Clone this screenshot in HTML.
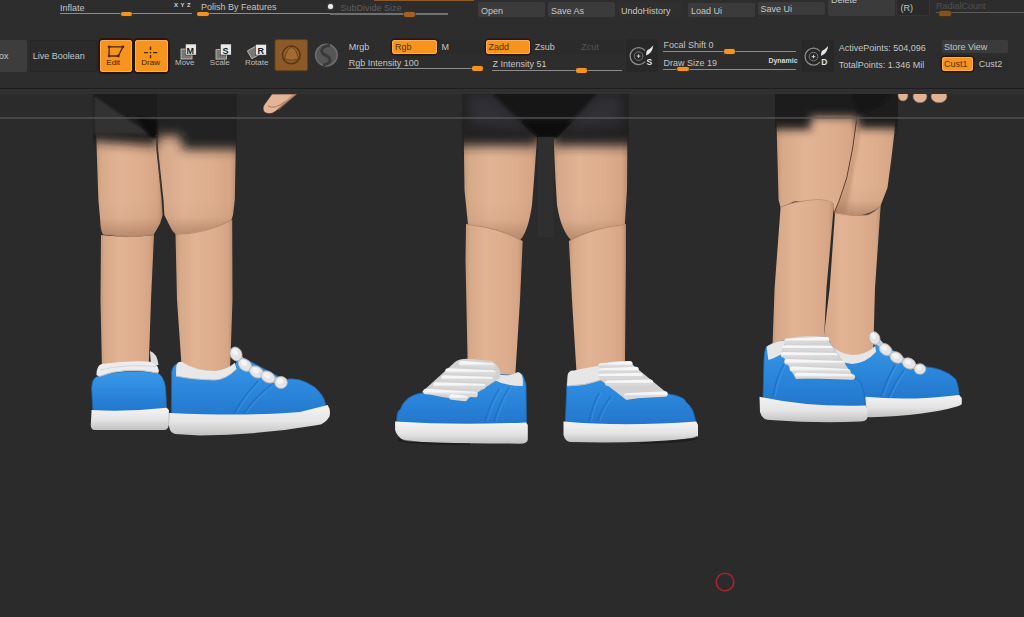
<!DOCTYPE html>
<html><head><meta charset="utf-8"><style>
html,body{margin:0;padding:0;background:#2b2b2b;width:1024px;height:617px;overflow:hidden;font-family:"Liberation Sans", sans-serif;}
</style></head><body>
<div style="position:absolute;left:0px;top:0px;width:1024.00px;height:88.00px;background:#2d2d2d;"></div>
<div style="position:absolute;left:0px;top:88px;width:1024.00px;height:1.00px;background:#1d1d1d;"></div>
<div style="position:absolute;left:0px;top:89px;width:1024.00px;height:5.00px;background:#313131;"></div>
<div style="position:absolute;left:0px;top:91.2px;width:1024.00px;height:0.80px;background:#2e2e2e;"></div>
<div style="position:absolute;left:60px;top:4.48px;font-size:9px;line-height:9px;color:#c4c4c4;font-weight:normal;white-space:nowrap;transform:scaleX(1.0);transform-origin:0 0;">Inflate</div>
<div style="position:absolute;left:60px;top:12.9px;width:132.00px;height:1.20px;background:#8c8c8c;"></div>
<div style="position:absolute;left:120.5px;top:11.7px;width:11.20px;height:4.10px;background:#f39325;border-radius:2px;box-shadow:0 0 0 0.6px #5a3408;"></div>
<svg style="position:absolute;left:0;top:0" width="400" height="20"><g fill="#d8d8d8" font-family="Liberation Sans" font-size="6" font-weight="bold"><text x="174" y="7">X</text><text x="180.5" y="7">Y</text><text x="187" y="7">Z</text></g></svg>
<div style="position:absolute;left:201px;top:3.08px;font-size:9px;line-height:9px;color:#c4c4c4;font-weight:normal;white-space:nowrap;transform:scaleX(1.0);transform-origin:0 0;">Polish By Features</div>
<div style="position:absolute;left:209px;top:12.9px;width:121.00px;height:1.20px;background:#8c8c8c;"></div>
<div style="position:absolute;left:197.3px;top:11.7px;width:11.70px;height:4.10px;background:#f39325;border-radius:2px;box-shadow:0 0 0 0.6px #5a3408;"></div>
<div style="position:absolute;left:328.3px;top:3.7px;width:5px;height:5px;border-radius:50%;background:#ececec;box-shadow:0 0 2px #aaa"></div>
<div style="position:absolute;left:340.4px;top:4.28px;font-size:9px;line-height:9px;color:#5e5e5e;font-weight:normal;white-space:nowrap;transform:scaleX(1.0);transform-origin:0 0;">SubDivide Size</div>
<div style="position:absolute;left:330px;top:13.4px;width:118.00px;height:1.20px;background:#707070;"></div>
<div style="position:absolute;left:403.7px;top:12px;width:11.30px;height:4.70px;background:#a0622a;border-radius:2px;box-shadow:0 0 0 0.6px #5a3408;"></div>
<div style="position:absolute;left:374px;top:0px;width:100.00px;height:1.30px;background:#8a5a2a;"></div>
<div style="position:absolute;left:478px;top:2px;width:67.00px;height:15.00px;background:#3b3b3b;border-radius:2px;"></div>
<div style="position:absolute;left:481px;top:6.78px;font-size:9px;line-height:9px;color:#c8c8c8;font-weight:normal;white-space:nowrap;transform:scaleX(1.0);transform-origin:0 0;">Open</div>
<div style="position:absolute;left:548px;top:2px;width:67.00px;height:15.00px;background:#3b3b3b;border-radius:2px;"></div>
<div style="position:absolute;left:551px;top:6.78px;font-size:9px;line-height:9px;color:#c8c8c8;font-weight:normal;white-space:nowrap;transform:scaleX(1.0);transform-origin:0 0;">Save As</div>
<div style="position:absolute;left:617px;top:2px;width:65.00px;height:15.00px;background:#2f2f2f;border-radius:2px;"></div>
<div style="position:absolute;left:621px;top:6.78px;font-size:9px;line-height:9px;color:#c8c8c8;font-weight:normal;white-space:nowrap;transform:scaleX(1.0);transform-origin:0 0;">UndoHistory</div>
<div style="position:absolute;left:688px;top:3px;width:67.00px;height:14.00px;background:#3b3b3b;border-radius:2px;"></div>
<div style="position:absolute;left:691px;top:6.58px;font-size:9px;line-height:9px;color:#c8c8c8;font-weight:normal;white-space:nowrap;transform:scaleX(1.0);transform-origin:0 0;">Load Ui</div>
<div style="position:absolute;left:758px;top:1.5px;width:67.00px;height:13.50px;background:#3b3b3b;border-radius:2px;"></div>
<div style="position:absolute;left:760.5px;top:5.48px;font-size:9px;line-height:9px;color:#c8c8c8;font-weight:normal;white-space:nowrap;transform:scaleX(1.0);transform-origin:0 0;">Save Ui</div>
<div style="position:absolute;left:828px;top:-2px;width:67.00px;height:17.50px;background:#3b3b3b;border-radius:2px;"></div>
<div style="position:absolute;left:831px;top:-3.52px;font-size:9px;line-height:9px;color:#c8c8c8;font-weight:normal;white-space:nowrap;transform:scaleX(1.0);transform-origin:0 0;">Delete</div>
<div style="position:absolute;left:896px;top:-2px;width:34.00px;height:17.50px;background:#2a2a2a;border-radius:2px;box-shadow:inset 0 0 0 1px #363636;"></div>
<div style="position:absolute;left:900.6px;top:4.28px;font-size:9px;line-height:9px;color:#c4c4c4;font-weight:normal;white-space:nowrap;transform:scaleX(1.0);transform-origin:0 0;">(R)</div>
<div style="position:absolute;left:936px;top:1.78px;font-size:9px;line-height:9px;color:#505050;font-weight:normal;white-space:nowrap;transform:scaleX(1.0);transform-origin:0 0;">RadialCount</div>
<div style="position:absolute;left:936px;top:12.1px;width:88.00px;height:1.20px;background:#5c5c5c;"></div>
<div style="position:absolute;left:939px;top:10.5px;width:12.00px;height:5.30px;background:#85521f;border-radius:2px;box-shadow:0 0 0 0.6px #5a3408;"></div>
<div style="position:absolute;left:-4px;top:40px;width:31.00px;height:31.50px;background:#3d3d3d;border-radius:2px;"></div>
<div style="position:absolute;left:-1px;top:51.78px;font-size:9px;line-height:9px;color:#c8c8c8;font-weight:normal;white-space:nowrap;transform:scaleX(1.0);transform-origin:0 0;">ox</div>
<div style="position:absolute;left:30px;top:40px;width:67.00px;height:32.00px;background:#2b2b2b;border-radius:2px;box-shadow:inset 0 0 0 1px #262626;"></div>
<div style="position:absolute;left:32.75px;top:51.78px;font-size:9px;line-height:9px;color:#c4c4c4;font-weight:normal;white-space:nowrap;transform:scaleX(1.0);transform-origin:0 0;">Live Boolean</div>
<div style="position:absolute;left:100.4px;top:39.5px;width:31.90px;height:32.25px;background:#f7941d;box-shadow:0 0 0 2px #2a1608, inset 0 0 0 1px #f9ad5a;border-radius:3px;"></div>
<div style="position:absolute;left:135.4px;top:39.5px;width:32.60px;height:32.25px;background:#f7941d;box-shadow:0 0 0 2px #2a1608, inset 0 0 0 1px #f9ad5a;border-radius:3px;"></div>
<svg style="position:absolute;left:0;top:0" width="400" height="90"><g stroke="#4a2808" stroke-width="1.3" fill="none"><path d="M109.1 46.8 L122.9 46.8 L118.3 56 L109.1 56 Z"/></g><g fill="#4a2808"><circle cx="109.1" cy="46.8" r="1.4"/><circle cx="122.9" cy="46.8" r="1.4"/><circle cx="118.3" cy="56" r="1.4"/><circle cx="109.1" cy="56" r="1.4"/></g><g stroke="#4a2808" stroke-width="1.4"><path d="M150.5 46.4 V50 M150.5 55 V58.3 M144.1 52.6 H148 M153 52.6 H157.3"/></g><circle cx="150.5" cy="52.6" r="0.9" fill="#4a2808"/><g font-family="Liberation Sans" font-size="8" fill="#3a1e04"><text x="106.3" y="65.3">Edit</text><text x="141.3" y="65.3">Draw</text></g><g><rect x="181" y="49" width="11" height="10" fill="#777" stroke="#c8c8c8" stroke-width="0.8"/><rect x="185.4" y="44" width="10.8" height="11" fill="#e8e8e8" stroke="#222" stroke-width="0.5"/><text x="186.6" y="53.5" font-family="Liberation Sans" font-size="9" font-weight="bold" fill="#1a1a1a">M</text><rect x="216" y="49.6" width="10.5" height="9.5" fill="#777" stroke="#c8c8c8" stroke-width="0.8"/><rect x="220.4" y="44" width="10.8" height="11" fill="#e8e8e8" stroke="#222" stroke-width="0.5"/><text x="222.6" y="53.5" font-family="Liberation Sans" font-size="9" font-weight="bold" fill="#1a1a1a">S</text><rect x="249" y="48" width="9.5" height="9" fill="#777" stroke="#c8c8c8" stroke-width="0.8" transform="rotate(-30 253.7 52.5)"/><rect x="255.6" y="44.3" width="10.8" height="10.8" fill="#e8e8e8" stroke="#222" stroke-width="0.5"/><text x="257.4" y="53.6" font-family="Liberation Sans" font-size="9" font-weight="bold" fill="#1a1a1a">R</text></g><g font-family="Liberation Sans" font-size="8" fill="#bdbdbd"><text x="175" y="65.4">Move</text><text x="209.8" y="65.4">Scale</text><text x="244.9" y="65.4">Rotate</text></g><rect x="274.9" y="39.6" width="32.8" height="31.2" rx="2" fill="#8b5a28" stroke="#5e3c18" stroke-width="0.8"/><circle cx="291.3" cy="54.9" r="8.8" fill="#93602c" stroke="#5a3510" stroke-width="1.5"/><path d="M284.5 58.5 Q287 48 291.5 47.5 Q296 48 298.5 58.5 Q291.5 62 284.5 58.5 Z" fill="#a06c34" stroke="#6a4014" stroke-width="1"/><circle cx="326.4" cy="55.1" r="10.8" fill="#565656" stroke="#6c6c6c" stroke-width="1.6"/><path d="M330 45.5 C320 46 320 53 325 55 C331 57.5 333 63 323 65" fill="none" stroke="#3a3a3a" stroke-width="3"/></svg>
<div style="position:absolute;left:348.7px;top:42.88px;font-size:9px;line-height:9px;color:#c4c4c4;font-weight:normal;white-space:nowrap;transform:scaleX(1.0);transform-origin:0 0;">Mrgb</div>
<div style="position:absolute;left:392.3px;top:39.7px;width:44.30px;height:14.80px;background:#f7941d;box-shadow:0 0 0 1.5px #2a1608, inset 0 0 0 1px #f9ad5a;border-radius:3px;"></div>
<div style="position:absolute;left:395px;top:43.28px;font-size:9px;line-height:9px;color:#5a3008;font-weight:normal;white-space:nowrap;transform:scaleX(1.0);transform-origin:0 0;">Rgb</div>
<div style="position:absolute;left:438px;top:39.7px;width:45.00px;height:14.80px;background:#2b2b2b;"></div>
<div style="position:absolute;left:441.5px;top:43.48px;font-size:9px;line-height:9px;color:#c4c4c4;font-weight:normal;white-space:nowrap;transform:scaleX(1.0);transform-origin:0 0;">M</div>
<div style="position:absolute;left:485.8px;top:39.5px;width:44.00px;height:14.10px;background:#f7941d;box-shadow:0 0 0 1.5px #2a1608, inset 0 0 0 1px #f9ad5a;border-radius:3px;"></div>
<div style="position:absolute;left:488.5px;top:42.88px;font-size:9px;line-height:9px;color:#5a3008;font-weight:normal;white-space:nowrap;transform:scaleX(1.0);transform-origin:0 0;">Zadd</div>
<div style="position:absolute;left:531px;top:39.5px;width:44.50px;height:14.50px;background:#2b2b2b;"></div>
<div style="position:absolute;left:534.8px;top:43.48px;font-size:9px;line-height:9px;color:#c4c4c4;font-weight:normal;white-space:nowrap;transform:scaleX(1.0);transform-origin:0 0;">Zsub</div>
<div style="position:absolute;left:577px;top:39.5px;width:47.00px;height:14.50px;background:#2b2b2b;"></div>
<div style="position:absolute;left:581.3px;top:42.88px;font-size:9px;line-height:9px;color:#555555;font-weight:normal;white-space:nowrap;transform:scaleX(1.0);transform-origin:0 0;">Zcut</div>
<div style="position:absolute;left:348.7px;top:58.88px;font-size:9px;line-height:9px;color:#c4c4c4;font-weight:normal;white-space:nowrap;transform:scaleX(1.0);transform-origin:0 0;">Rgb Intensity 100</div>
<div style="position:absolute;left:348px;top:68.2px;width:124.00px;height:1.20px;background:#8c8c8c;"></div>
<div style="position:absolute;left:471.7px;top:66px;width:11.60px;height:5.00px;background:#f39325;border-radius:2px;box-shadow:0 0 0 0.6px #5a3408;"></div>
<div style="position:absolute;left:492.4px;top:60.28px;font-size:9px;line-height:9px;color:#c4c4c4;font-weight:normal;white-space:nowrap;transform:scaleX(1.0);transform-origin:0 0;">Z Intensity 51</div>
<div style="position:absolute;left:492px;top:69.60000000000001px;width:130.00px;height:1.20px;background:#8c8c8c;"></div>
<div style="position:absolute;left:575.5px;top:67.7px;width:11.50px;height:5.00px;background:#f39325;border-radius:2px;box-shadow:0 0 0 0.6px #5a3408;"></div>
<div style="position:absolute;left:625.6px;top:39.4px;width:32.40px;height:32.50px;background:#282828;border-radius:2px;"></div>
<div style="position:absolute;left:800.5px;top:39.5px;width:33.50px;height:32.20px;background:#282828;border-radius:2px;"></div>
<div style="position:absolute;left:663.6px;top:40.68px;font-size:9px;line-height:9px;color:#c4c4c4;font-weight:normal;white-space:nowrap;transform:scaleX(1.0);transform-origin:0 0;">Focal Shift 0</div>
<div style="position:absolute;left:663px;top:50.5px;width:133.00px;height:1.20px;background:#8c8c8c;"></div>
<div style="position:absolute;left:724px;top:49px;width:11.00px;height:5.00px;background:#f39325;border-radius:2px;box-shadow:0 0 0 0.6px #5a3408;"></div>
<div style="position:absolute;left:663.6px;top:59.48px;font-size:9px;line-height:9px;color:#c4c4c4;font-weight:normal;white-space:nowrap;transform:scaleX(1.0);transform-origin:0 0;">Draw Size 19</div>
<div style="position:absolute;left:663px;top:68.5px;width:133.00px;height:1.20px;background:#8c8c8c;"></div>
<div style="position:absolute;left:676.6px;top:67px;width:12.00px;height:4.30px;background:#f39325;border-radius:2px;box-shadow:0 0 0 0.6px #5a3408;"></div>
<div style="position:absolute;left:768.4px;top:57.17px;font-size:7px;line-height:7px;color:#d8d8d8;font-weight:bold;white-space:nowrap;transform:scaleX(1.0);transform-origin:0 0;">Dynamic</div>
<div style="position:absolute;left:838.8px;top:43.78px;font-size:9px;line-height:9px;color:#c4c4c4;font-weight:normal;white-space:nowrap;transform:scaleX(1.0);transform-origin:0 0;">ActivePoints: 504,096</div>
<div style="position:absolute;left:838.8px;top:60.88px;font-size:9px;line-height:9px;color:#c4c4c4;font-weight:normal;white-space:nowrap;transform:scaleX(1.0);transform-origin:0 0;">TotalPoints: 1.346 Mil</div>
<div style="position:absolute;left:942px;top:39.8px;width:66.00px;height:13.20px;background:#3b3b3b;border-radius:2px;"></div>
<div style="position:absolute;left:944px;top:42.58px;font-size:9px;line-height:9px;color:#c4c4c4;font-weight:normal;white-space:nowrap;transform:scaleX(1.0);transform-origin:0 0;">Store View</div>
<div style="position:absolute;left:975px;top:57px;width:33.00px;height:14.00px;background:#2b2b2b;border-radius:2px;"></div>
<div style="position:absolute;left:941.6px;top:56.9px;width:31.70px;height:14.10px;background:#f7941d;box-shadow:0 0 0 1.5px #2a1608, inset 0 0 0 1px #f9ad5a;border-radius:3px;"></div>
<div style="position:absolute;left:944px;top:59.98px;font-size:9px;line-height:9px;color:#5a3008;font-weight:normal;white-space:nowrap;transform:scaleX(1.0);transform-origin:0 0;">Cust1</div>
<div style="position:absolute;left:978.7px;top:59.98px;font-size:9px;line-height:9px;color:#c4c4c4;font-weight:normal;white-space:nowrap;transform:scaleX(1.0);transform-origin:0 0;">Cust2</div>
<svg style="position:absolute;left:0;top:0" width="1024" height="94"><path d="M645.1 50.6 A8.5 8.5 0 1 0 645.1 61.6" fill="none" stroke="#8c8c8c" stroke-width="1.3"/><circle cx="638.6" cy="56.1" r="4.3" fill="none" stroke="#777" stroke-width="1"/><path d="M636.8000000000001 56.1 H640.4 M638.6 54.300000000000004 V57.9" stroke="#e0e0e0" stroke-width="0.9"/><path d="M646.2 55.5 Q645.6 50.1 649.6 49.1 L653.2 45.6 Q652.6 53.1 646.2 55.5 Z" fill="#e8e8e8"/><text x="646.4" y="64.5" font-family="Liberation Sans" font-weight="bold" font-size="8.5" fill="#e4e4e4">S</text></svg>
<svg style="position:absolute;left:0;top:0" width="1024" height="94"><path d="M820.0 51.1 A8.5 8.5 0 1 0 820.0 62.1" fill="none" stroke="#8c8c8c" stroke-width="1.3"/><circle cx="813.5" cy="56.6" r="4.3" fill="none" stroke="#777" stroke-width="1"/><path d="M811.7 56.6 H815.3 M813.5 54.800000000000004 V58.4" stroke="#e0e0e0" stroke-width="0.9"/><path d="M821.1 56.0 Q820.5 50.6 824.5 49.6 L828.1 46.1 Q827.5 53.6 821.1 56.0 Z" fill="#e8e8e8"/><text x="821.3" y="65.0" font-family="Liberation Sans" font-weight="bold" font-size="8.5" fill="#e4e4e4">D</text></svg>
<div style="position:absolute;left:0px;top:94px;width:1024.00px;height:523.00px;background:#2b2b2b;"></div>
<svg style="position:absolute;left:0;top:0" width="1024" height="617" viewBox="0 0 1024 617">
<defs>
<linearGradient id="skin" x1="0" x2="1" y1="0" y2="0"><stop offset="0" stop-color="#c4977a"/><stop offset="0.08" stop-color="#d6a989"/><stop offset="0.35" stop-color="#e2b394"/><stop offset="0.7" stop-color="#ddad8d"/><stop offset="0.92" stop-color="#d5a585"/><stop offset="1" stop-color="#bb8f72"/></linearGradient>
<linearGradient id="thighV" x1="0" x2="0" y1="0" y2="1"><stop offset="0" stop-color="#5a3018" stop-opacity="0"/><stop offset="0.5" stop-color="#5a3018" stop-opacity="0.04"/><stop offset="1" stop-color="#5a3018" stop-opacity="0.3"/></linearGradient>
<linearGradient id="blue" x1="0" x2="0" y1="0" y2="1"><stop offset="0" stop-color="#3c98e6"/><stop offset="0.5" stop-color="#2c88dc"/><stop offset="1" stop-color="#2276cc"/></linearGradient>
<linearGradient id="sole" x1="0" x2="0" y1="0" y2="1"><stop offset="0" stop-color="#f4f4f4"/><stop offset="0.55" stop-color="#e4e4e4"/><stop offset="1" stop-color="#c0c0c0"/></linearGradient>
<linearGradient id="lace" x1="0" x2="0" y1="0" y2="1"><stop offset="0" stop-color="#f6f6f6"/><stop offset="1" stop-color="#d8d8d8"/></linearGradient>
<filter id="hb" x="-10%" y="-50%" width="120%" height="200%"><feGaussianBlur stdDeviation="5.5"/></filter><filter id="hb3" x="-10%" y="-50%" width="120%" height="200%"><feGaussianBlur stdDeviation="4.5"/></filter>
<filter id="sb" x="-20%" y="-20%" width="140%" height="140%"><feGaussianBlur stdDeviation="1"/></filter>
<filter id="tb" x="-20%" y="-20%" width="140%" height="140%"><feGaussianBlur stdDeviation="0.5"/></filter>
<clipPath id="c1"><rect x="93" y="94" width="144" height="80"/></clipPath>
<clipPath id="c2"><rect x="462" y="94" width="167" height="80"/></clipPath>
<clipPath id="c3"><rect x="775" y="94" width="123" height="70"/></clipPath>
<clipPath id="vp"><rect x="0" y="94" width="1024" height="523"/></clipPath>
</defs>
<g clip-path="url(#vp)">

<!-- ===== FIGURE 1 ===== -->
<path d="M95.7 120 L156 120 L156.4 150 L161.7 200 L162.6 215 L160 223.8 L153.7 234.5 Q130 238 102.8 234 Q100.5 230 100.2 220 L98.4 200 Z" fill="url(#skin)"/>
<path d="M156 120 L236.5 120 L235.7 150 L234.8 200 L233 215 L231.3 220.3 Q205 234 176 234.5 Q172 231 170.6 227.4 L164.4 215 L163.5 200 L158.1 150 Z" fill="url(#skin)"/>
<path d="M163.5 200 L234.8 200 L233 215 L231.3 220.3 Q205 234 176 234.5 Q172 231 170.6 227.4 L164.4 215 Z" fill="url(#thighV)"/>
<path d="M98.4 200 L161.7 200 L162.6 215 L160 223.8 L153.7 234.5 Q130 238 102.8 234 Q100.5 230 100.2 220 Z" fill="url(#thighV)"/>
<path d="M101 235 Q130 238 154 235 L151 300 L148.5 372 L102 372 L100.5 300 Z" fill="url(#skin)"/>
<path d="M175.5 234 Q205 233.5 232.2 220 L232.5 300 L230 372 L182 372 L177 300 Z" fill="url(#skin)"/>
<path d="M102.8 234 Q130 238 153.7 234.5" fill="none" stroke="#b88a6c" stroke-width="0.9"/>
<path d="M176 234.5 Q205 234 231.3 220.3" fill="none" stroke="#b88a6c" stroke-width="0.9"/>
<g clip-path="url(#c1)"><g filter="url(#hb)">
<path d="M80 80 L157 80 L157 146 L80 140 Z" fill="#1e1e1e"/>
<path d="M157 80 L250 80 L250 149.5 L182 149.5 L180 136 L157 136 Z" fill="#222222"/>
</g>
<path d="M94 96 L94 134 L150 134 Z" fill="#323232" filter="url(#sb)"/>
<path d="M136 116 L157 120 L157 138 L150 137 Z" fill="#0f0f0f" filter="url(#sb)"/>
</g>
<path d="M156.2 135 L161.7 200 L162.6 214" fill="none" stroke="#6a4632" stroke-width="0.8" stroke-dasharray="1.2 0.8"/>

<!-- back shoe fig1 -->
<path d="M150 351 Q157 353 158.5 365 L151 366 Z" fill="#dedede"/>
<path d="M93 412 L91.6 388 Q92 377 99 376 Q126 368 158 373 Q166 378 166 395 L166.5 412 Z" fill="url(#blue)" stroke="#1f66b2" stroke-width="0.8"/>
<path d="M96.5 375 Q96.5 365 102 364 Q125 360.5 148 361.5 Q157.5 362 159 371 L158 373 Q126 366 99 376.5 Z" fill="#ececec"/>
<path d="M99 376.5 Q126 366 158 373" fill="none" stroke="#c4c4c4" stroke-width="1"/>
<path d="M100 370 Q126 363.5 156 366.5" fill="none" stroke="#d0d0d0" stroke-width="0.8"/>
<path d="M91.6 410 Q128 412 166.7 407.7 L168.9 410 L168.9 425 Q168 430 164 430 L95 430 Q90.8 430 90.8 425 Z" fill="url(#sole)"/>

<!-- side shoe fig1 -->
<path d="M171.6 418 L171.6 373 Q172 364 180 363 Q192 370 215 372.4 Q228 371 234.7 364.9 L240 356 L284.5 379.8 Q298 376 314.4 387 Q324 395 325.5 404 L328 412 L250 420 Z" fill="url(#blue)" stroke="#1f66b2" stroke-width="0.8"/>
<path d="M169.2 413 Q250 416.5 300 412 L327.7 405 Q331 410 329.5 416.4 Q325 424 318 425 Q260 435 200 435.5 L175 434 Q169 432 169 425 Z" fill="url(#sole)"/>
<path d="M176.2 367 Q177 361 182 362 Q195 370.5 214.8 371 Q228 369.5 234.7 362.8 L236.5 369 Q226 379.5 214.8 380 Q192 379.5 176 376 Z" fill="#e8e8e8"/>
<path d="M176 376 Q192 379.5 214.8 380 Q226 379.5 236.5 369" fill="none" stroke="#c0c0c0" stroke-width="1"/>
<g fill="none" stroke-width="1.2"><path d="M234 413 Q244 395 258 381" stroke="#1d68bc" stroke-opacity="0.7"/><path d="M236.5 413 Q246.5 395 260.5 381" stroke="#4aa2ec" stroke-opacity="0.6" stroke-width="0.9"/><path d="M244 413 Q255 397 271 385" stroke="#1d68bc" stroke-opacity="0.7"/><path d="M246.5 413 Q257.5 397 273.5 385" stroke="#4aa2ec" stroke-opacity="0.6" stroke-width="0.9"/></g>
<path d="M236 354 L245 365 L256.5 372 L268 377 L281 382.5" fill="none" stroke="#cfcfcf" stroke-width="6" stroke-linecap="round"/>
<g fill="#e4e4e4" stroke="#b4b4b4" stroke-width="0.8">
<ellipse cx="236" cy="354" rx="5.8" ry="7.2" transform="rotate(-25 236 354)"/>
<ellipse cx="245" cy="365" rx="7.5" ry="5.5" transform="rotate(40 245 365)"/>
<ellipse cx="256.5" cy="372" rx="7.5" ry="5.5" transform="rotate(30 256.5 372)"/>
<ellipse cx="268" cy="377" rx="7.5" ry="5.5" transform="rotate(30 268 377)"/>
<ellipse cx="281" cy="382.5" rx="6.3" ry="6.1"/>
</g>
<g fill="#f4f4f4"><ellipse cx="235" cy="352" rx="2.5" ry="3.5" transform="rotate(-25 235 352)"/><ellipse cx="244" cy="363" rx="3.5" ry="2.5" transform="rotate(40 244 363)"/><ellipse cx="255.5" cy="370.5" rx="3.5" ry="2.5" transform="rotate(30 255.5 370.5)"/><ellipse cx="267" cy="375.5" rx="3.5" ry="2.5" transform="rotate(30 267 375.5)"/><ellipse cx="280" cy="381" rx="3" ry="3"/></g>

<!-- ===== FIGURE 2 ===== -->
<path d="M463.6 125 L538 125 L534 180 L532 205 Q528 232 520 240 Q500 228 468 224.7 L464.5 190 Z" fill="url(#skin)"/>
<path d="M553 125 L627.5 125 L627 190 L624.8 224.7 Q592 228 571 240 Q561 230 557 205 L555.5 180 Z" fill="url(#skin)"/>
<path d="M463.6 200 L533 200 Q528 232 520 240 Q500 228 468 224.7 Z" fill="url(#thighV)"/>
<path d="M557 200 L627 200 L624.8 224.7 Q592 228 571 240 Q561 230 557 205 Z" fill="url(#thighV)"/>
<path d="M466 224 Q500 228 522.7 241 L520 300 L515 380 L468 380 L465.5 260 Z" fill="url(#skin)"/>
<path d="M568.9 241 Q592 228 625.9 224 L625.9 260 L624.8 380 L577 380 L572 300 Z" fill="url(#skin)"/>
<path d="M468 224.7 Q500 228 520 240" fill="none" stroke="#b88a6c" stroke-width="0.9"/>
<path d="M571 240 Q592 228 624.8 224.7" fill="none" stroke="#b88a6c" stroke-width="0.9"/>
<g clip-path="url(#c2)"><g filter="url(#hb)">
<path d="M450 80 L640 80 L640 146 L553 146 L553 137 L538 137 L538 146 L450 146 Z" fill="#212121"/>
</g>
<path d="M468 95 L493 95 L530 130 L470 125 Z" fill="#34363c" filter="url(#hb)" opacity="0.7"/>
<path d="M596 95 L622 95 L620 125 L562 130 Z" fill="#34363c" filter="url(#hb)" opacity="0.7"/>
<path d="M493 94 L538 137 L556 137 L596 94 Z" fill="#161616" filter="url(#sb)"/>
<path d="M522 122 L538 137 L556 137 L571 122 Z" fill="#0c0c0c" filter="url(#sb)"/>
</g>
<rect x="538" y="137" width="15.5" height="100" fill="#2f2f2f"/>

<!-- left shoe fig2 -->
<path d="M396.8 425 L396.8 419.9 Q397 410 400.2 409.7 Q405 395 424 392.6 L455 363 L493 365 L490.4 373 Q505 376 522.7 374.8 L526 384 L526.5 426 Z" fill="url(#blue)" stroke="#1f66b2" stroke-width="0.8"/>
<path d="M395.1 421.6 Q458 425.5 526.1 422.4 L527.8 425 L527.8 440 Q527 443.7 520 443.7 Q424 443 405 441 Q396.8 437 395.1 430 Z" fill="url(#sole)"/>
<path d="M398 438 Q410 443 470 443.5 L470 445 Q410 445 398 441 Z" fill="#151515" opacity="0.6"/>
<path d="M490 371 Q506 379 518 372 Q524 373 522.7 386 Q505 386 492 379 Z" fill="#e6e6e6"/>
<path d="M455 362 Q460 358 472 359 L492 361 Q502 368 500 378 L466 400 Q440 398 422 392 Z" fill="#d2d2d2"/>
<g stroke="url(#lace)" stroke-width="5.6" stroke-linecap="round" fill="none">
<path d="M461.5 363.5 L492 366"/><path d="M448 371 L493 373"/><path d="M444 378 L490.4 379.5"/><path d="M436 385 L482.7 386.5"/><path d="M426 391.5 L475 394.5"/><path d="M452 397 L465 398.5"/>
</g>
<g fill="none" stroke-width="1.1"><path d="M485 421 Q490 403 499 389" stroke="#1d68bc" stroke-opacity="0.7"/><path d="M487.5 421 Q492.5 403 501.5 389" stroke="#4aa2ec" stroke-opacity="0.6" stroke-width="0.8"/><path d="M494 421 Q499 403 509 387.5" stroke="#1d68bc" stroke-opacity="0.7"/><path d="M496.5 421 Q501.5 403 511.5 387.5" stroke="#4aa2ec" stroke-opacity="0.6" stroke-width="0.8"/></g>

<!-- right shoe fig2 -->
<path d="M565.2 426 L566.9 384 Q567 378 570 376 L599.2 372 L628.2 361.2 L665.6 393.5 Q684.3 396 686 402 Q693 408 694.6 416.5 L696.5 426 Z" fill="url(#blue)" stroke="#1f66b2" stroke-width="0.8"/>
<path d="M563.5 421.6 Q623 427 696.3 421.6 L698 425 L698 436 Q696 438 690 438.5 Q640 443.7 570 442 Q565 441 563.5 435 Z" fill="url(#sole)"/>
<path d="M640 442.5 Q690 440 697 436 L697 439 Q690 443 640 444 Z" fill="#151515" opacity="0.6"/>
<path d="M567.5 376 Q568 370 574 370.5 Q585 368 601 365.5 L601 380 Q585 386 567 386 Z" fill="#e6e6e6"/><path d="M567 386 Q585 386 601 380" fill="none" stroke="#bcbcbc" stroke-width="1"/>
<path d="M599.2 365.4 Q610 360 628.2 361.2 L667 393 L626.5 400 L599.2 379 Z" fill="#d2d2d2"/>
<g stroke="url(#lace)" stroke-width="5.6" stroke-linecap="round" fill="none">
<path d="M601 366 L629.9 363.7"/><path d="M601 371 L636 369.5"/><path d="M601 376.5 L640 375.6"/><path d="M607.8 383.3 L650.3 382.4"/><path d="M618 390.1 L660.5 390.1"/><path d="M626.5 396 L665 394"/>
</g>
<g fill="none" stroke-width="1.1"><path d="M589 421 Q592 405 599.2 392.6" stroke="#1d68bc" stroke-opacity="0.7"/><path d="M591.5 421 Q594.5 405 601.7 392.6" stroke="#4aa2ec" stroke-opacity="0.6" stroke-width="0.8"/><path d="M597.5 421 Q602 407 611.2 396" stroke="#1d68bc" stroke-opacity="0.7"/><path d="M600 421 Q604.5 407 613.7 396" stroke="#4aa2ec" stroke-opacity="0.6" stroke-width="0.8"/></g>

<!-- ===== FIGURE 3 ===== -->
<path d="M858 105 L896.5 105 L894.3 133.3 L891.4 158.6 L887.5 187.8 L880.7 205.3 Q872 215 852.5 216 Q840 215.5 834 213 L838.9 201.4 L846.7 178 L852.5 148.9 L856.4 121.7 Z" fill="url(#skin)"/>
<path d="M834 185 L889 185 L887.5 187.8 L880.7 205.3 Q872 215 852.5 216 Q840 215.5 834 213 Z" fill="url(#thighV)"/>
<path d="M856.4 121.7 L852.5 148.9 L846.7 178 L838.9 201.4 L834 213 L846 213 L852 180 L858 150 L861 121 Z" fill="#9a6a50" opacity="0.25" filter="url(#sb)"/>
<path d="M776 105 L858 105 L856.4 121.7 L852.5 148.9 L846.7 178 L838.9 201.4 L834 213 L833 203.3 Q817.5 199.4 794.2 201.4 L780.6 207.2 L778.6 200 L776.7 130 Z" fill="url(#skin)"/>
<path d="M835 213 Q852 216.5 868 215 Q876 212 880.7 205.3 L875 288 L873 360 L821 360 L829.7 288 Z" fill="url(#skin)"/>
<path d="M780.6 207.2 Q794 201 817.5 199.4 Q830 200 834 204 L826.5 288 L823 360 L772 360 L774.6 288 Z" fill="url(#skin)"/>
<path d="M835 213 Q852 217 868 215 Q876 212 880.7 205.3" fill="none" stroke="#b88a6c" stroke-width="0.9"/>
<path d="M780.6 207.2 Q794 201 817.5 199.4 Q830 200 834 204" fill="none" stroke="#c0937a" stroke-width="0.9"/>
<path d="M856.4 121.7 L852.5 148.9 L846.7 178 L838.9 201.4 L834 213" fill="none" stroke="#5a3a2a" stroke-width="0.9"/>
<g clip-path="url(#c3)"><g filter="url(#hb3)">
<path d="M760 80 L920 80 L920 128.5 L858 128.5 L858 117 L811 117 L811 129.5 L760 129.5 Z" fill="#1e1e1e"/>
</g>
<path d="M852 94 L892 94 Q878 110 858 113 Z" fill="#141414" filter="url(#sb)"/>
</g>

<!-- back shoe fig3 -->
<path d="M830 352 L830.7 346.8 Q840 358 852.1 358.3 Q866 357 875.3 348.5 L873.5 336 L920.8 370 L923.4 366.4 Q944.8 368 955.5 378.9 Q959 386 959.5 400 L865 402 L852 377 Z" fill="url(#blue)" stroke="#1f66b2" stroke-width="0.8"/>
<path d="M865.5 396.7 Q909.2 401.1 959.1 394.9 L961.8 398 L961.8 404 Q960.9 405.6 955 407 Q927 415.4 870 417.2 L865 417 Z" fill="url(#sole)"/>
<path d="M830.7 345 Q840 354 852 355 Q866 355 875.3 346 L876 352 Q866 363 852 364 Q838 362 830 353 Z" fill="#e6e6e6"/>
<g fill="none" stroke-width="1.2"><path d="M880.6 397 Q886 380 894.9 364.6" stroke="#1d68bc" stroke-opacity="0.7"/><path d="M883 397 Q888.5 380 897.4 364.6" stroke="#4aa2ec" stroke-opacity="0.6" stroke-width="0.9"/><path d="M887.8 398 Q894 383 903.8 370" stroke="#1d68bc" stroke-opacity="0.7"/><path d="M890.3 398 Q896.5 383 906.3 370" stroke="#4aa2ec" stroke-opacity="0.6" stroke-width="0.9"/></g>
<path d="M874.5 338 L885.5 349.5 L896.5 357.5 L909 363.5 L920 369" fill="none" stroke="#cfcfcf" stroke-width="5.5" stroke-linecap="round"/>
<g fill="#e4e4e4" stroke="#b4b4b4" stroke-width="0.8">
<ellipse cx="874.5" cy="338" rx="5.2" ry="6.6" transform="rotate(-25 874.5 338)"/>
<ellipse cx="885.5" cy="349.5" rx="6.9" ry="5.3" transform="rotate(40 885.5 349.5)"/>
<ellipse cx="896.5" cy="357.5" rx="6.9" ry="5.3" transform="rotate(30 896.5 357.5)"/>
<ellipse cx="909" cy="363.5" rx="6.9" ry="5.3" transform="rotate(25 909 363.5)"/>
<ellipse cx="920" cy="369" rx="5.8" ry="5.3"/>
</g>
<g fill="#f4f4f4"><ellipse cx="873.5" cy="336" rx="2.2" ry="3.2" transform="rotate(-25 873.5 336)"/><ellipse cx="884.5" cy="348" rx="3.2" ry="2.3" transform="rotate(40 884.5 348)"/><ellipse cx="895.5" cy="356" rx="3.2" ry="2.3" transform="rotate(30 895.5 356)"/><ellipse cx="908" cy="362" rx="3.2" ry="2.3" transform="rotate(25 908 362)"/><ellipse cx="919" cy="367.5" rx="2.6" ry="2.5"/></g>
<!-- front shoe fig3 -->
<path d="M763 402 L763.9 362.8 Q764 350 766.6 346.7 L786.2 339.6 L826.3 337 L852.2 377 Q862 380 862 387.8 Q864.7 392 864.7 398.5 L866 408 Z" fill="url(#blue)" stroke="#1f66b2" stroke-width="0.8"/>
<path d="M759.5 396.7 Q808.5 407.4 865.6 405.6 L867.4 410 L867.4 418 Q866 421.6 860 421.6 Q817.4 423.4 770 420 Q762 419.9 760 412 Z" fill="url(#sole)"/>
<path d="M766.6 346.7 Q770 343 786 340 L781.7 354 Q775 358 768.4 360 Z" fill="#e6e6e6"/>
<path d="M786.2 339.6 Q800 334 826.3 337 L854 377 L796 379 L781.7 353.9 Z" fill="#d2d2d2"/>
<g stroke="url(#lace)" stroke-width="5.6" stroke-linecap="round" fill="none">
<path d="M787.1 341.4 L826.3 339.6"/><path d="M785 348 L830 348.5"/><path d="M783.5 354.8 L835.2 355.7"/><path d="M787.1 361.9 L842.4 363.7"/><path d="M792.4 369 L847.7 371.7"/><path d="M797.8 375.3 L852.2 377"/>
</g>
<g fill="none" stroke-width="1.1"><path d="M772.8 396 Q776 378 783.5 364.6" stroke="#1d68bc" stroke-opacity="0.7"/><path d="M775.3 396 Q778.5 378 786 364.6" stroke="#4aa2ec" stroke-opacity="0.6" stroke-width="0.8"/></g>

<!-- fingers -->
<path d="M272 94 L297 94 L276 111 Q270 116 264 112 Q262 108 264 105 Z" fill="#e2b498" stroke="#4a2a18" stroke-width="0.7"/>
<path d="M268 106 Q274 110 286 101" fill="none" stroke="#9a6a50" stroke-width="0.8"/>
<path d="M293 94 L297 94 L279 110 L277 109 Z" fill="#a07860" opacity="0.6"/>
<g fill="#dfb394" stroke="#7a5a48" stroke-width="0.6"><ellipse cx="903" cy="95.5" rx="5" ry="5.5"/><ellipse cx="920" cy="96.5" rx="7" ry="6.3"/><ellipse cx="939" cy="96.5" rx="8" ry="6.3"/></g>

<!-- horizontal line -->
<rect x="0" y="117.3" width="1024" height="1.3" fill="#5e5e5e" fill-opacity="0.9"/>
</g>
<circle cx="725" cy="582" r="8.8" fill="none" stroke="#a8242c" stroke-width="1.6"/>
</svg>

</body></html>
